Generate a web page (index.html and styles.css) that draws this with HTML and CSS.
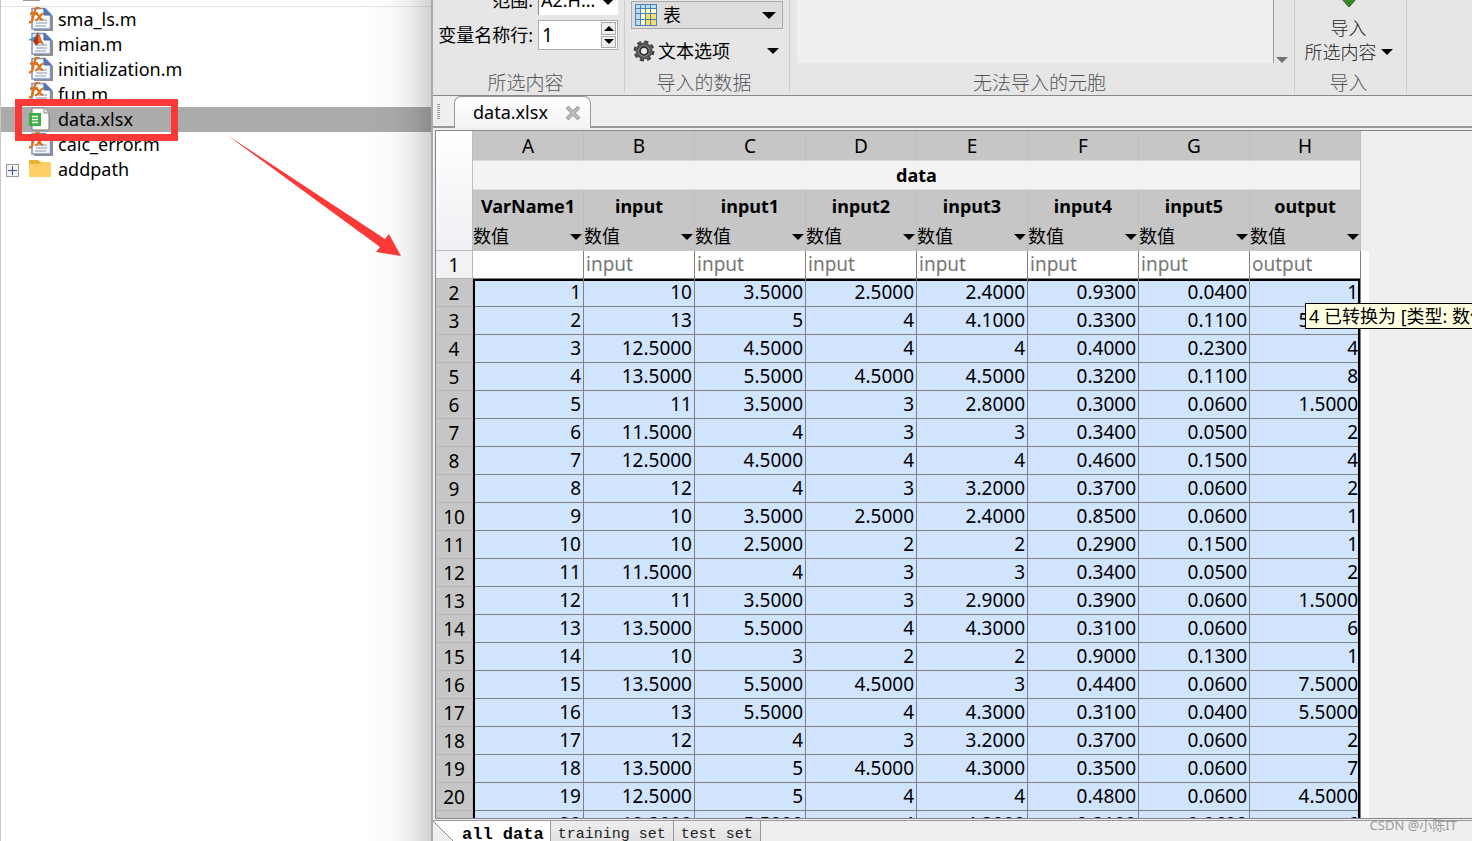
FILE: index.html
```html
<!DOCTYPE html>
<html lang="zh-CN">
<head>
<meta charset="utf-8">
<title>data.xlsx</title>
<link rel="stylesheet" href="styles.css">
</head>
<body>
<svg width="0" height="0" class="defs" aria-hidden="true">
  <symbol id="page" viewBox="0 0 26 25">
    <path d="M6 24V3H19L25 9V24Z" fill="#938d85"/>
    <path d="M4 1.5H17L22.500 7V22H4Z" fill="#f7faff" stroke="#7f93c0" stroke-width="1.500"/>
    <path d="M16 1.500V8H22.500Z" fill="#5876b5" stroke="#4865a3"/>
    <path d="M8 13H19M8 16H19M7 19H18" stroke="#aeb6c8" stroke-width="1.500"/>
  </symbol>
  <symbol id="fx" viewBox="0 0 26 25">
    <use href="#page"/>
    <path d="M1 15C4 16 4.500 13 5 10L7 3.500C7.500 1 9 0 11.500 1M2 6.500H10" fill="none" stroke="#df7115" stroke-width="2.400"/>
    <path d="M7.500 7C11 5.500 11 14 15 12.500M15.500 6.500C12 6.500 11 13 7 13.500" fill="none" stroke="#df7115" stroke-width="2.200"/>
  </symbol>
</svg>
<div class="desktop">
  <aside class="files">
    <div class="files-head"><span></span></div>
    <ul>
      <li><svg class="ico"><use href="#fx"/></svg>sma_ls.m</li>
      <li><svg class="ico" viewBox="0 0 26 25"><use href="#page"/><path d="M0 8L6 5L10 1L16 13L11 10L8 13L5 9Z" fill="#438fc4"/><path d="M5 9L8 5L10 0C12 3 13 9 16 13C13 10 11 10 8 14Z" fill="#b83218"/><path d="M10 0C12 3 13 9 16 13C13 11 11 10 10 10Z" fill="#e56b24"/></svg>mian.m</li>
      <li><svg class="ico"><use href="#fx"/></svg>initialization.m</li>
      <li><svg class="ico"><use href="#fx"/></svg>fun.m</li>
      <li class="current"><svg class="ico" viewBox="0 0 26 25"><path d="M4 1H16L21 6V23H4Z" fill="#fff" stroke="#777"/><path d="M16 1V6H21" fill="#eee" stroke="#888"/><path d="M1 6H13V19H1Z" fill="#3fae40"/><path d="M4 9.500H10M4 12.500H10M4 15.500H10" stroke="#fff" stroke-width="1.500"/></svg>data.xlsx</li>
      <li><svg class="ico"><use href="#fx"/></svg>calc_error.m</li>
      <li><button class="expand" aria-label="展开"></button><svg class="ico" viewBox="0 0 26 25"><path d="M1 3H10L13 5H23V19H1Z" fill="#e9b432"/><path d="M1 7H11L13 5H23V20H1Z" fill="#fdd065"/></svg>addpath</li>
    </ul>
    <svg class="arrow" viewBox="0 0 174 122" aria-hidden="true"><path d="M0 0L158 104L162 99L174 121L149 117L153 112Z" fill="#fb3a38"/></svg>
    <div class="marker"></div>
  </aside>

  <main class="import">
    <div class="toolbar">
      <section class="group g-select">
        <div class="body">
          <div class="field"><label for="range">范围:</label><span class="drop range"><select id="range"><option>A2:H...</option></select></span></div>
          <div class="field"><label for="names">变量名称行:</label><span class="spin"><input id="names" value="1"><span class="steps"><button aria-label="增加"><i class="up"></i></button><button aria-label="减少"><i class="down"></i></button></span></span></div>
        </div>
        <h2>所选内容</h2>
      </section>
      <section class="group g-data">
        <div class="body">
          <button class="type"><svg width="22" height="22" viewBox="0 0 22 22"><path d="M0 0H22V22H0Z" fill="#4c82ad"/><path d="M1 1H5V4H1ZM6 1H10V4H6ZM11 1H15V4H11ZM16 1H21V4H16ZM1 5H5V9H1ZM1 10H5V15H1ZM1 16H5V21H1Z" fill="#b7dcf3"/><path d="M6 5H10V9H6ZM11 5H15V9H11ZM16 5H21V9H16ZM6 10H10V15H6ZM6 16H10V21H6Z" fill="#fff9cf"/><path d="M11 10H15V15H11ZM16 10H21V15H16ZM11 16H15V21H11ZM16 16H21V21H16Z" fill="#f8df72"/></svg>表<i class="down big"></i></button>
          <button class="options"><svg width="22" height="22" viewBox="0 0 22 22"><circle cx="11" cy="11" r="9" fill="none" stroke="#444" stroke-width="3" stroke-dasharray="4 3.070"/><circle cx="11" cy="11" r="7" fill="#bbb" stroke="#555" stroke-width="3"/><circle cx="11" cy="11" r="4" fill="#eee" stroke="#333" stroke-width="2"/></svg>文本选项<i class="down"></i></button>
        </div>
        <h2>导入的数据</h2>
      </section>
      <section class="group g-rules">
        <div class="body"><div class="rules"></div><i class="down more"></i></div>
        <h2>无法导入的元胞</h2>
      </section>
      <section class="group g-import">
        <div class="body"><button class="go"><svg width="24" height="24" viewBox="0 0 24 24"><path d="M8 0H16V14H20L12 23L4 14H8Z" fill="#3c8527" stroke="#28601a"/></svg><span>导入</span><span>所选内容<i class="down"></i></span></button></div>
        <h2>导入</h2>
      </section>
    </div>

    <div class="tabs">
      <span class="grip"></span>
      <div class="tab">data.xlsx<button aria-label="关闭"><svg width="16" height="16" viewBox="0 0 16 16"><path d="M2 2L14 14M14 2L2 14" stroke="#aaa" stroke-width="4"/><path d="M3 3L13 13M13 3L3 13" stroke="#ccc" stroke-width="1"/></svg></button></div>
    </div>

    <div class="sheet">
      <table>
        <colgroup><col class="num"><col span="8"></colgroup>
        <thead>
          <tr class="letters"><th rowspan="3" class="corner"></th><th>A</th><th>B</th><th>C</th><th>D</th><th>E</th><th>F</th><th>G</th><th>H</th></tr>
          <tr class="title"><th colspan="8">data</th></tr>
          <tr class="vars" id="vars"></tr>
        </thead>
        <tbody id="rows"></tbody>
      </table>
      <div class="tip" role="tooltip">4 已转换为 [类型: 数值]</div>
    </div>

    <nav class="sheets">
      <svg width="24" height="24" viewBox="0 0 24 24"><path d="M0 0H24V24H22Z" fill="#fff"/><path d="M0 0L22 22" stroke="#888"/></svg>
      <button class="on">all data</button><button>training set</button><button>test set</button>
    </nav>
    <div class="credit">CSDN @小陈IT</div>
  </main>
</div>
<script src="data.js"></script>
</body>
</html>
```
FILE: styles.css
```css
* { box-sizing: border-box; }
body { margin: 0; background: #fff; color: #000; font: 19px/25px "Noto Sans", "Noto Sans CJK SC", sans-serif; }
button, input, select { font: inherit; color: inherit; margin: 0; padding: 0; border: 0; background: none; border-radius: 0; }
select { appearance: none; }
.defs { position: absolute; }
.desktop { display: flex; height: 100vh; overflow: hidden; }

.files { position: relative; flex: 0 0 433px; border-left: 1px solid #c8c8c8; font-size: 18px; }
.files::after { content: ""; position: absolute; inset: 0 0 0 auto; width: 68px; border-right: 2px solid #aaa; background: linear-gradient(to right, transparent, rgba(0,0,0,.02) 40%, rgba(0,0,0,.07) 70%, rgba(0,0,0,.18)); }
.files-head { height: 7px; border-bottom: 1px solid #e5e5e5; padding-left: 22px; }
.files-head span { display: block; width: 17px; height: 1px; background: #999; }
.files ul { list-style: none; margin: 0; padding: 0; }
.files li { display: flex; align-items: center; height: 25px; padding-left: 27px; gap: 4px; position: relative; }
.files .current { background: #ababab; }
.ico { width: 26px; height: 25px; flex: none; }
.expand { position: absolute; left: 5px; top: 7px; width: 13px; height: 13px; border: 1px solid #999; background: linear-gradient(#35558f, #35558f) center/9px 1px no-repeat, linear-gradient(#35558f, #35558f) center/1px 9px no-repeat, #f2f2f2; }
.marker { position: absolute; left: 14px; top: 99px; width: 163px; height: 42px; border: 7px solid #fb3a38; }
.arrow { position: absolute; left: 226px; top: 135px; width: 174px; height: 122px; z-index: 1; }

.import { position: relative; flex: 1; min-width: 0; display: flex; flex-direction: column; background: #efefef; }
.toolbar { flex: none; height: 96px; display: flex; overflow: hidden; background: #e6e6e6; border-bottom: 1px solid #888; font-size: 18px; }
.group { display: flex; flex-direction: column; justify-content: flex-end; border-right: 1px solid #ccc; height: 93px; }
.group h2 { margin: 0; font-size: 19px; font-weight: 300; line-height: 20px; color: #555; text-align: center; flex: none; }
.body { flex: none; height: 73px; display: flex; flex-direction: column; justify-content: flex-end; }
.g-select { flex: 0 0 192px; padding-right: 6px; }
.g-select .body { gap: 5px; padding-bottom: 23px; }
.field { display: flex; flex: none; align-items: center; justify-content: flex-end; gap: 5px; height: 30px; }
.drop { position: relative; display: block; }
.range select { width: 80px; height: 30px; padding-left: 2px; background: #fff; border-left: 1px solid #888; display: block; }
.drop::after { content: ""; position: absolute; right: 4px; top: 14px; border: 6px solid transparent; border-top: 6px solid #000; border-bottom: 0; pointer-events: none; }
.spin { display: flex; width: 80px; height: 30px; border: 1px solid #aaa; background: #fff; }
.spin input { flex: 1; min-width: 0; padding-left: 3px; font-size: 19px; }
.steps { display: flex; flex-direction: column; gap: 1px; padding: 1px; width: 17px; }
.steps button { flex: 1; display: flex; align-items: center; justify-content: center; border: 1px solid #aaa; background: #eee; }
i.down, i.up { display: block; border: 6px solid transparent; border-top: 6px solid #000; border-bottom: 0; }
i.up { border-top: 0; border-bottom: 6px solid #000; }
.steps i.up { border-width: 0 5px 5px; }
.steps i.down { border-width: 5px 5px 0; }
i.down.big { border-width: 7px 7px 0; }
.g-data { flex: 0 0 165px; padding: 0 6px; }
.g-data .body { padding-bottom: 9px; gap: 9px; }
.g-data h2, .g-rules h2 { padding-right: 6px; }
.g-data button { display: flex; align-items: center; text-align: left; }
.g-data i { margin-left: auto; }
.g-data .type { height: 28px; gap: 6px; padding: 0 6px 0 3px; border: 1px solid #aaa; background: #ddd; }
.g-data .options { height: 26px; gap: 3px; padding: 0 4px 0 2px; }
.g-rules { flex: 1 1 505px; padding: 0 6px 0 7px; }
.g-rules .body { flex-direction: row; align-items: flex-end; gap: 2px; padding-bottom: 10px; }
.rules { flex: 1; height: 64px; border-right: 1px solid #999; background: #efefef; }
.more { opacity: .5; }
.g-import { flex: 0 0 112px; padding-right: 4px; }
.go { display: flex; flex-direction: column; align-items: center; padding-bottom: 9px; color: #222; line-height: 24px; font-weight: 300; }
.g-import .body { align-items: center; }
.go svg { margin-bottom: 8px; }
.go span { display: flex; align-items: center; gap: 4px; }
.toolbar::after { content: ""; flex: 0 0 65px; }

.tabs { flex: none; display: flex; height: 32px; border-bottom: 2px solid #999; padding-left: 4px; }
.grip { width: 3px; height: 16px; margin: 8px 14px 0 0; background: repeating-linear-gradient(#999 0 1px, transparent 1px 2px); }
.tab { display: flex; align-items: center; gap: 17px; height: 32px; padding: 0 9px 0 18px; border: 1px solid #999; border-bottom: 0; border-radius: 7px 7px 0 0; background: linear-gradient(#fff, #f3f3f6); font-size: 18px; }
.tab button { display: flex; }

.sheet { position: relative; flex: 1; min-height: 0; overflow: hidden; margin: 2px 0 0 2px; border: 1px solid #85838f; border-right: 0; }
table { table-layout: fixed; width: 925px; border-spacing: 0; }
col { width: 111px; }
col.num { width: 37px; }
th, td { padding: 0; }
thead th { background: #c6c6c6; border-right: 1px solid #bebebe; font-weight: 400; }
.letters th { height: 30px; padding-top: 1px; border-bottom: 1px solid #d8d8d8; }
thead .corner { background: linear-gradient(#fff, #eef0f3); border-bottom: 1px solid #bbb; }
.title th { height: 29px; background: #f3f3f3; font-size: 18px; font-weight: 700; border-bottom: 1px solid #ddd; }
.vars th { height: 61px; font-size: 18px; font-weight: 700; vertical-align: top; }
.vars label { display: block; line-height: 32px; height: 32px; }
.vars select { display: block; width: 100%; height: 29px; font-size: 18px; font-weight: 400; }
.vars .drop::after { right: 1px; top: 12px; }
tbody th { height: 28px; padding-top: 1px; background: #c6c6c6; border-right: 1px solid #b5b5b5; border-bottom: 1px solid #b5b5b5; font-weight: 400; line-height: 26px; }
td { position: relative; height: 28px; line-height: 27px; padding-right: 2px; text-align: right; background: #d0e4fe; border-right: 1px solid #808080; border-bottom: 1px solid #808080; }
.names th { background: #f1f2f4; }
.names td { background: #fff; color: #777; text-align: left; padding-left: 2px; }
tbody td:last-child::after { content: ""; position: absolute; left: 100%; top: 0; width: 8px; height: 28px; margin-left: 1px; background: #fff; }
tbody tr:not(.names) td:nth-child(2)::before,
tbody tr:not(.names) td:last-child::before { content: ""; position: absolute; top: 0; left: 0; width: 2px; height: 28px; background: #000; }
tbody tr:not(.names) td:last-child::before { left: auto; right: 0; }
tbody tr.first td { box-shadow: inset 0 2px #000; }
.tip { position: absolute; left: 869px; top: 172px; width: 300px; height: 26px; padding-left: 3px; border: 1px solid #000; background: #ffffe1; font-size: 18px; line-height: 24px; white-space: nowrap; }

.sheets { flex: none; display: flex; height: 21px; margin-top: 1px; border-top: 1px solid #999; overflow: hidden; font: 15px/26px "Liberation Mono", monospace; }
.sheets button { flex: none; height: 28px; padding: 0 7px; border-right: 1px solid #999; background: linear-gradient(#eee, #ddd); color: #222; }
.sheets .on { padding: 0 6px 0 5px; background: #fff; font-size: 17px; font-weight: 700; color: #000; }
.credit { position: absolute; right: 15px; bottom: 6px; color: #999; font-size: 13px; line-height: 20px; }
```
FILE: data.js
```js
const names = ["VarName1", "input", "input1", "input2", "input3", "input4", "input5", "output"];
const data = `10 3.5000 2.5000 2.4000 0.9300 0.0400 1
13 5 4 4.1000 0.3300 0.1100 5.5000
12.5000 4.5000 4 4 0.4000 0.2300 4
13.5000 5.5000 4.5000 4.5000 0.3200 0.1100 8
11 3.5000 3 2.8000 0.3000 0.0600 1.5000
11.5000 4 3 3 0.3400 0.0500 2
12.5000 4.5000 4 4 0.4600 0.1500 4
12 4 3 3.2000 0.3700 0.0600 2
10 3.5000 2.5000 2.4000 0.8500 0.0600 1
10 2.5000 2 2 0.2900 0.1500 1
11.5000 4 3 3 0.3400 0.0500 2
11 3.5000 3 2.9000 0.3900 0.0600 1.5000
13.5000 5.5000 4 4.3000 0.3100 0.0600 6
10 3 2 2 0.9000 0.1300 1
13.5000 5.5000 4.5000 3 0.4400 0.0600 7.5000
13 5.5000 4 4.3000 0.3100 0.0400 5.5000
12 4 3 3.2000 0.3700 0.0600 2
13.5000 5 4.5000 4.3000 0.3500 0.0600 7
12.5000 5 4 4 0.4800 0.0600 4.5000
12.3000 5.5000 4 4.3000 0.3100 0.0600 6`.split("\n").map(line => line.split(" "));

document.getElementById("vars").innerHTML = names.map((name, i) =>
  `<th><label for="v${i}">${name}</label><span class="drop"><select id="v${i}"><option>数值</option></select></span></th>`).join("");

const row = (n, cells, cls) => `<tr class="${cls}"><th>${n}</th>${cells.map(c => `<td>${c}</td>`).join("")}</tr>`;
document.getElementById("rows").innerHTML =
  row(1, ["", ...names.slice(1).map(n => n === "output" ? n : "input")], "names") +
  data.map((cells, i) => row(i + 2, [i + 1, ...cells], i ? "" : "first")).join("");
```
